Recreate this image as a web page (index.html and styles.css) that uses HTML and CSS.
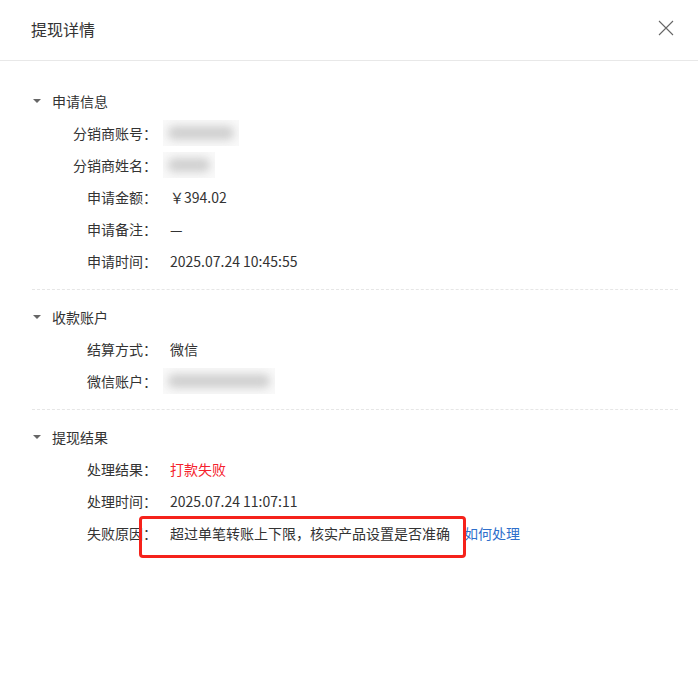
FILE: index.html
```html
<!DOCTYPE html>
<html lang="zh-CN">
<head>
    <meta charset="UTF-8">
    <meta name="viewport" content="width=device-width, initial-scale=1.0">
    <title>提现详情</title>
    <link rel="stylesheet" href="styles.css">
</head>
<body>

    <div class="dialog">
        <div class="dialog-header">
            <span class="dialog-title">提现详情</span>
            <button class="close-btn" aria-label="关闭">
                <svg width="16" height="16" viewBox="0 0 16 16">
                    <path d="M1 1 L15 15 M15 1 L1 15" stroke="#666" stroke-width="1.1" fill="none"/>
                </svg>
            </button>
        </div>

        <div class="section first">
            <div class="section-title"><span class="caret"></span>申请信息</div>
            <div class="row"><span class="label">分销商账号：</span><span class="masked w70"></span></div>
            <div class="row"><span class="label">分销商姓名：</span><span class="masked w48"></span></div>
            <div class="row"><span class="label">申请金额：</span><span class="value">￥394.02</span></div>
            <div class="row"><span class="label">申请备注：</span><span class="value">—</span></div>
            <div class="row"><span class="label">申请时间：</span><span class="value">2025.07.24 10:45:55</span></div>
        </div>

        <div class="section">
            <div class="section-title"><span class="caret"></span>收款账户</div>
            <div class="row"><span class="label">结算方式：</span><span class="value">微信</span></div>
            <div class="row"><span class="label">微信账户：</span><span class="masked w104"></span></div>
        </div>

        <div class="section last">
            <div class="section-title"><span class="caret"></span>提现结果</div>
            <div class="row"><span class="label">处理结果：</span><span class="value fail">打款失败</span></div>
            <div class="row"><span class="label">处理时间：</span><span class="value">2025.07.24 11:07:11</span></div>
            <div class="row">
                <span class="label">失败原因：</span>
                <span class="value reason">超过单笔转账上下限，核实产品设置是否准确<span class="mark-box"></span></span>
                <a class="help-link" href="#">如何处理</a>
            </div>
        </div>
    </div>

</body>
</html>
```

FILE: styles.css
```css
body {
    margin: 0;
    padding: 0;
    background: #fff;
    font-family: "Noto Sans CJK SC", "Noto Sans", sans-serif;
    color: #333;
    font-size: 14px;
}

.dialog {
    width: 698px;
    min-height: 673px;
    background: #fff;
}

.dialog-header {
    height: 61px;
    display: flex;
    align-items: center;
    justify-content: space-between;
    padding: 0 24px 0 31px;
    border-bottom: 1px solid #e8e8e8;
    box-sizing: border-box;
}

.dialog-title {
    font-size: 16px;
    color: #333;
    margin-top: -2px;
}

.close-btn {
    background: none;
    border: none;
    padding: 0;
    width: 16px;
    height: 16px;
    margin-top: -5px;
    cursor: pointer;
}

.section {
    margin: 0 20px 0 32px;
    padding: 11px 0 12px;
    border-bottom: 1px dashed #e6e6e6;
}

.section.first {
    padding-top: 24px;
}

.section.last {
    border-bottom: none;
}

.section-title {
    height: 32px;
    line-height: 32px;
    display: flex;
    align-items: center;
    color: #333;
}

/* Collapse arrow */
.caret {
    width: 0;
    height: 0;
    border-left: 4px solid transparent;
    border-right: 4px solid transparent;
    border-top: 4px solid #666;
    margin: 0 11px 0 1px;
}

.row {
    height: 32px;
    display: flex;
    align-items: center;
}

.label {
    width: 125px;
    text-align: right;
    color: #333;
}

.value {
    margin-left: 13px;
    color: #333;
}

.value.fail {
    color: #f5222d;
}

.reason {
    position: relative;
}

/* Red annotation frame */
.mark-box {
    position: absolute;
    left: -31px;
    top: -7px;
    width: 321px;
    height: 36px;
    border: 3px solid #f5221b;
    border-radius: 4px;
}

.help-link {
    margin-left: 14px;
    color: #2f6fcb;
    text-decoration: none;
}

/* Blurred, hidden personal data */
.masked {
    margin-left: 6px;
    height: 26px;
    background: #f9f9f9;
    position: relative;
    overflow: hidden;
}

.masked::after {
    content: "";
    position: absolute;
    left: 5px;
    right: 5px;
    top: 6px;
    bottom: 6px;
    background: #d0d0d0;
    border-radius: 6px;
    filter: blur(4px);
}

.w70 { width: 76px; }
.w48 { width: 52px; }
.w104 { width: 112px; }
```
